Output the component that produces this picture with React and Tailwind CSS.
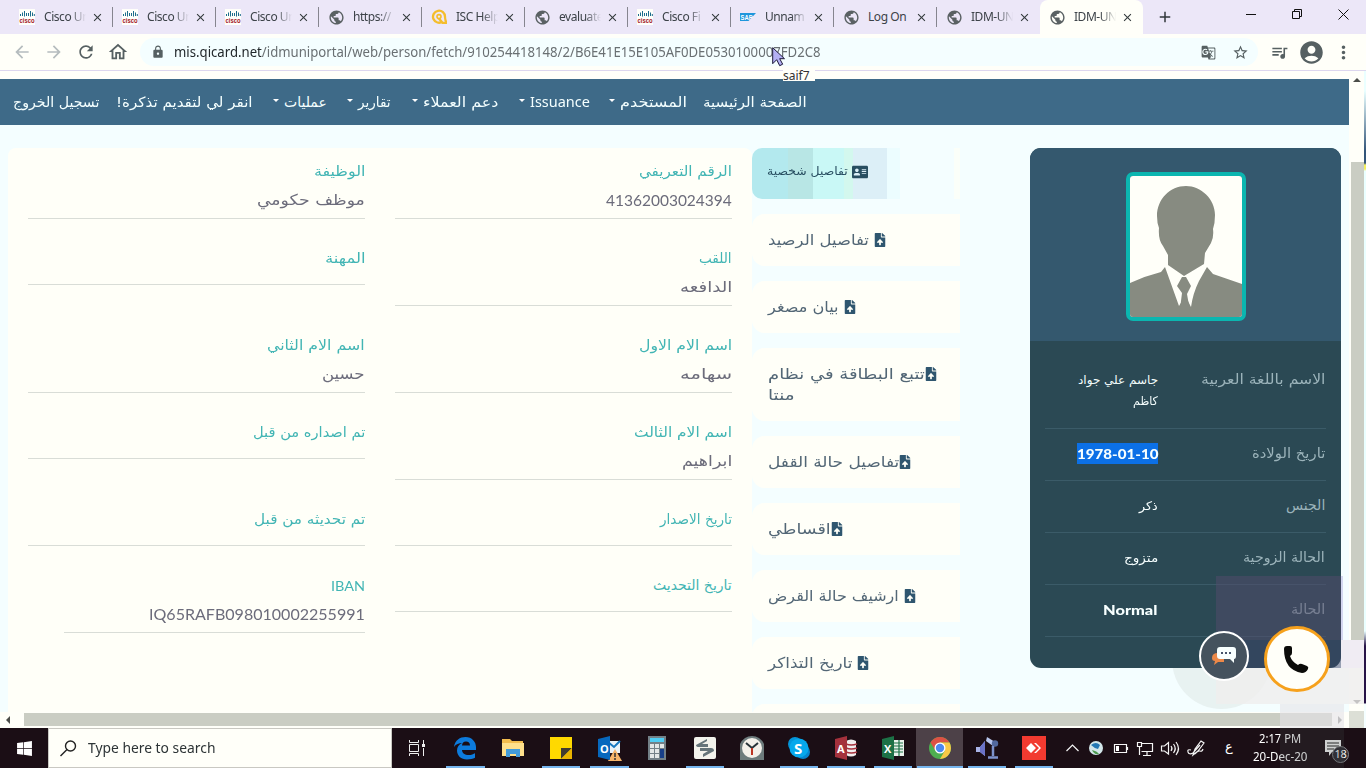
import React, { useLayoutEffect, useRef, useState } from "react";
import { FaFileUpload, FaAddressCard, FaWindows } from "react-icons/fa";
import {
  MdArrowBack, MdArrowForward, MdRefresh, MdLock, MdPublic, MdQueueMusic, MdAccountCircle,
  MdMoreVert, MdStarBorder, MdGTranslate, MdOutlineHome, MdClose, MdAdd, MdPhone,
} from "react-icons/md";

/* Single-line text condensed or widened to a given width. */
function Fit({ w, children, className = "", rtl = true }) {
  const ref = useRef(null);
  const [scale, setScale] = useState(1);
  useLayoutEffect(() => {
    const n = ref.current.offsetWidth;
    if (n) setScale(w / n);
  }, [w, children]);
  return (
    <span className={"flex shrink-0 justify-start " + className} dir="ltr" style={{ width: w }}>
      <span ref={ref} dir={rtl ? "rtl" : "ltr"} className="shrink-0 origin-left whitespace-nowrap" style={{ transform: `scaleX(${scale})` }}>
        {children}
      </span>
    </span>
  );
}

const AR = "font-['DejaVu_Sans',sans-serif]";

function CiscoIcon() {
  return (
    <svg width="16" height="16" viewBox="0 0 16 16" overflow="visible">
      <rect width="16" height="16" fill="#fffffa" />
      <path d="M1.500 5v2M3.500 3.500v3.500M5.500 2v5.500M7.500 4v3M9.500 4v3M11.500 2v5.500M13.500 3.500v3.500M15.300 5v2" stroke="#1c6c8c" strokeWidth="1" />
      <text x="0.5" y="14.300" fontSize="7.500" fontWeight="bold" fill="#a01424" textLength="15" lengthAdjust="spacingAndGlyphs" fontFamily="Liberation Sans">cisco</text>
    </svg>
  );
}
function QIcon() {
  return (
    <svg width="16" height="16" viewBox="0 0 16 16" fill="none" stroke="#f4bd2c" strokeWidth="2.3">
      <path d="M11.5 12.6A6 6 0 1 1 14 8q0 4 2 5.8h-4.5L8 9.5" />
      <circle cx="8" cy="7.6" r="2" strokeWidth="1.6" />
    </svg>
  );
}
function SapIcon() {
  return (
    <svg width="16" height="16" viewBox="0 0 16 16">
      <path d="M0 4h16L8.5 12H0z" fill="#1e96dc" />
      <text x="0.6" y="10.6" fontSize="7" fontWeight="bold" fill="#fff" textLength="12" lengthAdjust="spacingAndGlyphs" fontFamily="Liberation Sans">SAP</text>
    </svg>
  );
}
const globe = <MdPublic className="size-[17px] text-[#5a6163]" />;
const tabs = [
  { icon: <CiscoIcon />, t: "Cisco Un" },
  { icon: <CiscoIcon />, t: "Cisco Un" },
  { icon: <CiscoIcon />, t: "Cisco Un" },
  { icon: globe, t: "https://" },
  { icon: <QIcon />, t: "ISC Help" },
  { icon: globe, t: "evaluate" },
  { icon: <CiscoIcon />, t: "Cisco Fi" },
  { icon: <SapIcon />, t: "Unnam" },
  { icon: globe, t: "Log On", full: true },
  { icon: globe, t: "IDM-UN" },
  { icon: globe, t: "IDM-UN", active: true },
];

function TabStrip() {
  return (
    <div className="flex h-[34px] shrink-0 bg-[#ece7f8] pl-[10px] text-[#3c4248]">
      {tabs.map((tab, i) => (
        <div key={i} className={"relative flex h-[34px] w-[103px] shrink-0 items-center pl-[9px] " + (tab.active ? "rounded-t-lg bg-[#fffff9]" : "")}>
          <span className="flex w-[17px] shrink-0">{tab.icon}</span>
          <span className={"ml-[8px] w-[42px] shrink-0 overflow-hidden whitespace-nowrap font-['Noto_Sans',sans-serif] text-[12px] tracking-[-0.45px] " + (tab.full ? "" : "[mask-image:linear-gradient(to_right,black_62%,transparent)]")}>{tab.t}</span>
          <MdClose className="ml-[5px] size-[13px] shrink-0 stroke-current text-[#333a3c]" />
          {i < 9 && <span className="ml-auto h-[20px] w-px bg-[#86858f]" />}
        </div>
      ))}
      <div className="flex w-[43px] items-center justify-center"><MdAdd className="size-[18px] stroke-current text-[#30373a]" /></div>
      <svg className="ml-auto mr-[15px] mt-[6px]" width="108" height="18" fill="none" stroke="#111" strokeWidth="1">
        <path d="M3 8.500h10M51.500 5.500v-2h7v7h-2M49.500 5.500h7v7h-7zM95.500 3.500l10 10M105.500 3.500l-10 10" />
      </svg>
    </div>
  );
}

function AddressBar() {
  return (
    <div className="flex h-[37px] shrink-0 items-center border-b border-[#dcd6ee] bg-[#fffff9] text-[#566062]">
      <MdArrowBack className="ml-[12px] size-5 text-[#b5bcbe]" />
      <MdArrowForward className="ml-[12px] size-5 text-[#b5bcbe]" />
      <MdRefresh className="ml-[12px] size-5" />
      <MdOutlineHome className="ml-[11px] size-[22px]" />
      <div className="ml-[11px] flex h-[28px] w-[1118px] items-center rounded-full bg-[#f4feff]">
        <MdLock className="ml-[11px] size-[14px]" />
        <Fit w={647} rtl={false} className="ml-[9px] font-['Noto_Sans',sans-serif] text-[14px] leading-5 text-[#6a7073]">
          <span className="text-[#22282b]">mis.qicard.net</span>/idmuniportal/web/person/fetch/910254418148/2/B6E41E15E105AF0DE0530100007FD2C8
        </Fit>
        <MdGTranslate className="ml-auto size-[15px]" />
        <MdStarBorder className="ml-[16px] mr-[9px] size-[17px]" />
      </div>
      <MdQueueMusic className="ml-[12px] size-[19px]" />
      <MdAccountCircle className="ml-[9px] size-[27px]" />
      <MdMoreVert className="ml-[8px] size-[21px]" />
    </div>
  );
}

const nav = [
  { t: "تسجيل الخروج", w: 86, g: "ml-[13px]" },
  { t: "انقر لي لتقديم تذكرة!", w: 137, g: "ml-[17px]" },
  { t: "عمليات", w: 43, g: "ml-[20px]", c: true },
  { t: "تقارير", w: 33, g: "ml-[20px]", c: true },
  { t: "دعم العملاء", w: 75, g: "ml-[21px]", c: true },
  { t: "Issuance", w: 60, g: "ml-[21px]", c: true },
  { t: "المستخدم", w: 67, g: "ml-[19px]", c: true },
  { t: "الصفحة الرئيسية", w: 104, g: "ml-[16px]" },
];
function Navbar() {
  return (
    <nav className="flex h-[46px] shrink-0 items-center bg-[#3e6a88] text-[#f4ffff]">
      {nav.map((n) => (
        <div key={n.t} className={"flex items-center " + n.g}>
          {n.c && <span className="mr-[5px] -mt-1 border-x-[3px] border-t-[3px] border-x-transparent border-t-white" />}
          <Fit w={n.w} className={"-mt-px text-[14px] leading-5 " + (n.t === "Issuance" ? "font-['Noto_Sans',sans-serif]" : AR)} rtl={n.t !== "Issuance"}>{n.t}</Fit>
        </div>
      ))}
    </nav>
  );
}

/* label, label width, value, value width : right column then left column */
const fields = [
  ["الرقم التعريفي", 93, "41362003024394", 126], ["الوظيفة", 51, "موظف حكومي", 108],
  ["اللقب", 33, "الدافعه", 52], ["المهنة", 40],
  ["اسم الام الاول", 93, "سهامه", 52], ["اسم الام الثاني", 98, "حسين", 43],
  ["اسم الام الثالث", 98, "ابراهيم", 50], ["تم اصداره من قبل", 112],
  ["تاريخ الاصدار", 72], ["تم تحديثه من قبل", 111],
  ["تاريخ التحديث", 79], ["IBAN", 34, "IQ65RAFB098010002255991", 216],
];
function Details() {
  return (
    <section dir="rtl" className="ml-[8px] mt-[23px] grid h-[600px] w-[744px] shrink-0 grid-cols-[337px_337px] grid-rows-[87px_87px_87px_87px_66px_87px] content-start gap-x-[30px] rounded-t-lg bg-[#fffff8] pr-[20px] pt-[9px]">
      {fields.map(([l, lw, v, vw]) => {
        const latin = l === "IBAN";
        const latinValue = v && /\d/.test(v);
        return (
          <div key={l} className={"flex flex-col items-start border-b border-[#d9ddd7] " + (v ? "h-[62px]" : "h-[41px]") + (latin ? " w-[301px]" : "")}>
            <Fit w={lw} rtl={!latin} className={"h-[28px] items-center text-[14px] text-[#42b5b4] " + (latin ? "font-['Lato',sans-serif]" : AR)}>{l}</Fit>
            {v && <Fit w={vw} rtl={!latinValue} className={"h-[30px] items-center text-[15px] text-[#6c6c7b] " + (latinValue ? "font-['Lato',sans-serif]" : AR)}>{v}</Fit>}
          </div>
        );
      })}
    </section>
  );
}

const menu = [
  ["تفاصيل الرصيد", 101, true], ["بيان مصغر", 71, true], ["تتبع البطاقة في نظام", 157, false, "منتا"],
  ["تفاصيل حالة القفل", 131], ["اقساطي", 63], ["ارشيف حالة القرض", 131, true], ["تاريخ التذاكر", 84, true],
];
function SideMenu() {
  return (
    <aside className="mt-[23px] flex w-[208px] shrink-0 flex-col gap-[15px]">
      <div className="flex h-[51px] items-center rounded-l-[10px] border-r-[6px] border-[#fbfff9] bg-[linear-gradient(to_right,#b3e9ee_0_36px,#b8e6e5_36px_61px,#c9f8f6_61px_92px,#d3f8ee_92px_101px,#dceff7_101px_135px,#ecfdff_135px_148px,#f4feff_148px)] pl-[15px] text-[#284e61]">
        <Fit w={81} className={"-mt-1 text-[11.5px] " + AR}>تفاصيل شخصية</Fit>
        <FaAddressCard className="-mt-1 ml-[4px] size-[16px]" />
      </div>
      {menu.map(([t, w, space, second]) => (
        <div key={t} className={"flex shrink-0 flex-col justify-center rounded-l-[13px] bg-[#fffff8] pl-[16px] text-[#536776] " + (second ? "h-[73px]" : "h-[52px]")}>
          <div className="flex h-[21px] items-center">
            <Fit w={w} className={"text-[15px] " + AR}>{t}</Fit>
            <FaFileUpload className={"size-[14px] shrink-0 text-[#2f566f] " + (space ? "ml-[4px]" : "-ml-px")} />
          </div>
          {second && <Fit w={27} className={"h-[21px] items-center text-[15px] " + AR}>{second}</Fit>}
        </div>
      ))}
      <div className="h-[52px] shrink-0 rounded-tl-[13px] bg-[#fffff8]" />
    </aside>
  );
}

function Portrait() {
  return (
    <svg width="112" height="141" viewBox="0 0 112 141">
      <rect width="112" height="141" fill="#fffff9" />
      <g fill="#878b81">
        <path d="M56 10C40 10 27 23 27 40q0 7 2 12-1 12 4 18l5 9v10l16 11 20-12 1-11 6-10q3-6 2-14 2-6 2-14C85 23 71 10 56 10Z" />
        <path d="M0 107q15-7 31-11l4-5 14 39 3-5h6l3 6q2-14 8-26l8-14 6 7 29 10v34H0Z" />
        <path d="M52 101h4l5 9-4 8 4 23H49l3-24-5-7Z" />
      </g>
    </svg>
  );
}

const info = [
  ["تاريخ الولادة", 73, "1978-01-10", 81], ["الجنس", 39, "ذكر", 19],
  ["الحالة الزوجية", 82, "متزوج", 34], ["الحالة", 34, "Normal", 55],
];
function Profile() {
  return (
    <section className="ml-[70px] mt-[23px] flex h-[520px] w-[311px] shrink-0 flex-col overflow-hidden rounded-[11px] bg-[#2b4954]">
      <div className="flex h-[193px] shrink-0 justify-center bg-[#34586e] pt-[24px]">
        <div className="h-[149px] w-[120px] overflow-hidden rounded-[7px] border-4 border-[#0bb6b0]"><Portrait /></div>
      </div>
      <div className="mx-[15px] flex h-[88px] shrink-0 items-start justify-end border-b border-[#3b5b68] pr-px pt-[28px]">
        <div className={"mr-[43px] flex flex-col items-end text-[12px] text-[#f3fcfc] " + AR}>
          <Fit w={80} className="h-[21px] items-center">جاسم علي جواد</Fit>
          <Fit w={25} className="h-[21px] items-center">كاظم</Fit>
        </div>
        <Fit w={124} className={"h-[21px] items-center text-[14px] text-[#9bb3ba] " + AR}>الاسم باللغة العربية</Fit>
      </div>
      {info.map(([l, lw, v, vw], i) => {
        const latin = i === 0 || i === 3;
        return (
          <div key={l} className="mx-[15px] flex h-[52px] shrink-0 items-center border-b border-[#3b5b68] pb-[2px] pr-px">
            <div className="flex w-[113px] justify-end">
              <Fit w={vw} rtl={!latin} className={"h-[21px] items-center text-[#f7ffff] " + (latin ? "font-['Lato',sans-serif] text-[14px] font-black " : "text-[12px] " + AR) + (i === 0 ? " bg-[#0c70e6]" : "")}>{v}</Fit>
            </div>
            <Fit w={lw} className={"ml-auto h-[21px] items-center text-[14px] text-[#9bb3ba] " + AR}>{l}</Fit>
          </div>
        );
      })}
    </section>
  );
}

const Office = ({ fill, l, children }) => (
  <svg width="26" height="26" viewBox="0 0 26 26">
    {children}
    <path d="M2 4l12-3v24L2 22Z" fill={fill} />
    <text x="4" y="17.500" fontSize="11" fontWeight="bold" fill="#fff" fontFamily="Open Sans">{l}</text>
  </svg>
);
const apps = [
  [<svg width="24" height="24" viewBox="0 0 24 24"><path d="M1 11C2 4 7 1 12.500 1 19 1 23 6 23 11v3H9c0 3 3 5 6.500 5 3 0 5-1 6.500-1.800v4.600C20 23 17 23.500 14 23.500 8 23.500 4 19.500 4 14.500 4 11 6 8.500 9 7 6 7 3 8 1 11Zm8-1.500h8C17 7 15.500 5.500 13 5.500S9.300 7 9 9.500Z" fill="#0d7bdc" /></svg>, "w-[39px]"],
  [<svg width="24" height="24" viewBox="0 0 24 24"><path d="M1 3h8l2 2h11v15H1Z" fill="#f3bd4e" /><path d="M1 7h22v13H1Z" fill="#ffe08c" /><path d="M5 13h14v8h-4v-3H9v3H5Z" fill="#439bd9" /></svg>, ""],
  [<svg width="24" height="24" viewBox="0 0 24 24"><path d="M1 1h22v22H1Z" fill="#ffd900" /><path d="M12 23V12h11Z" fill="#413c30" /><path d="M12 23l11-11v11Z" fill="#eab500" /></svg>, "w-[38px]"],
  [<Office fill="#0768bd" l="O"><path d="M12 6h12v12H12Z" fill="#e9f3fa" /><path d="M12 7l6 5 6-6" stroke="#1677c0" strokeWidth="2" fill="none" /><path d="M19 14l7 12H12Z" fill="#f6b56b" /><path d="M19 18v4m0 1v2" stroke="#333" strokeWidth="1.500" /></Office>, "w-[39px]"],
  [<svg width="20" height="24" viewBox="0 0 20 24"><path d="M1 0h18v24H1Z" fill="#738087" /><path d="M3 2h14v4H3Z" fill="#4fcdf4" /><path d="M3 8h4v4H3Zm5 0h4v4H8Zm5 0h4v4h-4ZM3 13h4v4H3Zm5 0h4v4H8ZM3 18h4v4H3Zm5 0h4v4H8Z" fill="#e3e7e7" /><path d="M13 13h4v9h-4Z" fill="#183f88" /></svg>, ""],
  [<svg width="22" height="22" viewBox="0 0 22 22"><rect width="22" height="22" rx="2" fill="#f3f3ec" /><path d="M13 2L2 8q0 2 3 2h9V7L8 7l5-3ZM9 20l11-6q0-3-3-3H6v3h8l-5 3Z" fill="#66757a" /></svg>, "w-[38px]"],
  [<svg width="24" height="24" viewBox="0 0 24 24"><path d="M0 24V8Q4 0 12 0t12 8v16Z" fill="#6d7b7c" /><circle cx="12" cy="12" r="10" fill="#f3f0ea" /><path d="M6 7l6 5 6-5" stroke="#273238" strokeWidth="2" fill="none" /><path d="M12 12v7" stroke="#bd3423" strokeWidth="2" /></svg>, ""],
  [<svg width="24" height="24" viewBox="0 0 24 24"><circle cx="8" cy="8" r="7" fill="#0495d9" /><circle cx="16" cy="16" r="7" fill="#0785ce" /><circle cx="12" cy="12" r="9.500" fill="#06a8ec" /><text x="7" y="17.500" fontSize="15" fontWeight="bold" fill="#fff" fontFamily="Open Sans">S</text></svg>, "w-[38px]"],
  [<Office fill="#a4313c" l="A"><path d="M13 6q5-3 10 0v14q-5 3-10 0Z" fill="#f1eeee" /><path d="M13 9q5 2 11 0M13 13q5 2 11 0M13 17q5 2 11 0" stroke="#a4313c" strokeWidth="1.500" fill="none" /></Office>, "w-[38px]"],
  [<Office fill="#1c7146" l="X"><path d="M13 5h11v16H13Z" fill="#e9f2eb" /><path d="M14 8h9M14 11h9M14 14h9M14 17h9M19 5v16" stroke="#1c7146" strokeWidth="1.200" /></Office>, "w-[38px]"],
  [<svg width="24" height="24" viewBox="0 0 24 24"><circle cx="12" cy="12" r="11" fill="#4eae50" /><path d="M2.500 6.500A11 11 0 0 1 21.500 6.500H12L7 14Z" fill="#dd5144" /><path d="M12 6.500h9.500A11 11 0 0 1 12 23l4.800-8.200Z" fill="#f9c846" /><circle cx="12" cy="12" r="5.500" fill="#fff" /><circle cx="12" cy="12" r="4.200" fill="#4d88f0" /></svg>, "w-[46px]", "bg-[#4d4148]"],
  [<svg width="24" height="24" viewBox="0 0 24 24"><path d="M1 11h4l5-6v15l-5-4H1Z" fill="#aab4e8" /><path d="M5 11l5-6v15l-5-4Z" fill="#6b73c8" /><path d="M12 1l8 5-2 4-7-5Z" fill="#b8c7ee" /><circle cx="20" cy="7.500" r="3.200" fill="#52699e" /><path d="M18 10v10M13 21.500h10" stroke="#7d92cc" strokeWidth="2.500" /></svg>, "w-[38px]"],
  [<svg width="24" height="24" viewBox="0 0 24 24"><path d="M0 0h24v24H0Z" fill="#f23a30" /><path d="M9 7l5 5-5 5-5-5ZM12 7h2l5 5-5 5h-2l5-5Z" fill="#fff" /></svg>, "w-[38px]"],
];

function Taskbar() {
  return (
    <div className="flex h-[40px] shrink-0 bg-[#1b0e15] text-white">
      <div className="flex w-[48px] items-center justify-center"><FaWindows className="size-[17px]" /></div>
      <div className="flex w-[344px] items-center border border-[#c9c8c2] bg-[#fffff9] text-[#2d3436]">
        <svg className="ml-[11px]" width="17" height="17" fill="none" stroke="#222" strokeWidth="1.400"><circle cx="10.500" cy="6" r="5" /><path d="M7 9.500L.5 16" /></svg>
        <Fit w={127} rtl={false} className="ml-[11px] font-['Noto_Sans',sans-serif] text-[14.5px]">Type here to search</Fit>
      </div>
      <div className="flex w-[49px] items-center justify-center">
        <svg width="18" height="16" fill="none" stroke="#eee"><path d="M1.500 0v2.500h9V0M1.500 4.500h9v7h-9zM1.500 16v-2.500h9V16M15.500 0v4M15.500 8v8" /><path d="M14 4h3v3h-3z" fill="#eee" stroke="none" /></svg>
      </div>
      {apps.map(([icon, bar, bg], i) => (
        <div key={i} className={"relative flex shrink-0 items-center justify-center " + (i < 5 ? "w-[48px] " : "w-[47px] ") + (bg || "")}>
          {icon}
          <span className={"absolute bottom-0 h-[2px] bg-[#76b5ee] " + bar} />
        </div>
      ))}
      <svg className="ml-[8px] mt-[8px]" width="140" height="24" fill="none" stroke="#f5f5f5" strokeWidth="1.200">
        <path d="M1.500 15l6-6 6 6" />
        <circle cx="31" cy="12" r="7" fill="#d3e7ea" stroke="none" /><path d="M26 9q5-4 9 0l-2 4q-4-1-7-4Z" fill="#2478b4" stroke="none" /><path d="M27 14q5 1 7 4-5 1-7-4Z" fill="#4c9a4f" stroke="none" />
        <path d="M49.500 8.500h12v8h-12zM62.500 11v3" /><path d="M51 10h3v5h-3z" fill="#fff" stroke="none" />
        <path d="M76.500 7.500h11v8h-11M82 16v3M78 19.500h8M72.500 6.500h4v4h-4zM74.500 11v8" />
        <path d="M96.500 10v5h3l4 3V6.500l-4 3.500zM106 10q2 2.500 0 5M108.500 8q3.500 4.500 0 9M111 6q5 6.500 0 13" />
        <path d="M126 14q-4-1-3 2 1 3 5 1l7-8M128 19l2-6 6-8 3 2-6 8zM130 18q3-4 5-3t3-2" />
      </svg>
      <span className="ml-[20px] mt-[9px] w-[8px] font-['DejaVu_Sans',sans-serif] text-[13px]">ع</span>
      <div className="ml-[18px] flex w-[58px] flex-col items-center justify-center font-['Noto_Sans',sans-serif] text-[12px] leading-[18px]">
        <Fit w={42} rtl={false}>2:17 PM</Fit>
        <Fit w={54} rtl={false}>20-Dec-20</Fit>
      </div>
      <div className="relative ml-[15px] mt-[11px] h-[24px] w-[26px]">
        <svg width="18" height="18"><path d="M1 1h16v12H8l-3 4v-4H1Z" fill="#fff" /><path d="M3 4h12M3 7h12M3 10h7" stroke="#222" /></svg>
        <span className="absolute left-[8px] top-[7px] flex size-[17px] items-center justify-center rounded-full border border-[#85858a] bg-[#2c2930] font-['Noto_Sans',sans-serif] text-[11px] tracking-tight">18</span>
      </div>
    </div>
  );
}

export default function App() {
  return (
    <div className="relative flex h-[768px] w-[1366px] flex-col overflow-hidden bg-[#fffff9]">
      <TabStrip />
      <AddressBar />
      <div className="flex h-[657px] shrink-0">
        <div className="mt-[8px] flex w-[1349px] shrink-0 flex-col">
          <Navbar />
          <div className="flex h-[587px] shrink-0 items-start overflow-hidden bg-[#f4feff]">
            <Details />
            <SideMenu />
            <Profile />
          </div>
          <div className="flex h-[15px] shrink-0 items-center">
            <span className="ml-[6px] border-y-[4px] border-r-[4px] border-y-transparent border-r-[#4b4d49]" />
            <span className="ml-[14px] h-[13px] w-[1308px] bg-[#cacdc3]" />
            <span className="ml-[6px] border-y-[4px] border-l-[4px] border-y-transparent border-l-[#898b87]" />
          </div>
        </div>
        <div className="flex w-[15px] flex-col items-center">
          <span className="mt-[7px] border-x-[4px] border-b-[4px] border-x-transparent border-b-[#4b4d49]" />
          <span className="ml-[2px] mt-[80px] h-[478px] w-[13px] bg-[#cacdc3]" />
          <span className="mt-[60px] border-x-[4px] border-t-[4px] border-x-transparent border-t-[#222]" />
          <span className="mt-[7px] h-[17px] w-full bg-[#dcdfd6]" />
        </div>
        <div className="w-[2px] bg-[linear-gradient(to_bottom,#eaffff_0_20px,#33557a_80px_92px,#f4f060_94px_98px,#eaffff_100px_560px,#281448_575px_632px,#f4feff_633px)]" />
      </div>
      <Taskbar />

      {/* floating contact controls with their translucent backdrop */}
      <div className="absolute left-[1172px] top-[610px] h-[99px] w-[108px] overflow-hidden [clip-path:inset(58px_0_0_0)]"><div className="size-[99px] rounded-full bg-[#dfe9e8]/60" /></div>
      <div className="absolute left-[1216px] top-[576px] h-[64px] w-[125px] bg-[#544b6c]/50" />
      <div className="absolute left-[1341px] top-[576px] h-[64px] w-[2px] bg-[#d3d8f0]" />
      <div className="absolute left-[1216px] top-[640px] h-[28px] w-[125px] bg-[#3c4468]/50" />
      <div className="absolute left-[1216px] top-[668px] h-[36px] w-[148px] bg-[#efeeee]/80" />
      <div className="absolute left-[1341px] top-[640px] h-[28px] w-[23px] bg-[#eeeaf2]/90" />
      <div className="absolute left-[1280px] top-[704px] h-[24px] w-[64px] bg-[#e5e3e8]/60" />
      <div className="absolute left-[1280px] top-[728px] h-[40px] w-[64px] bg-[#3a4444]/25" />
      <div className="absolute left-[1199px] top-[631px] flex size-[50px] items-center justify-center rounded-full border-2 border-white bg-[#45525e]">
        <svg width="26" height="22" viewBox="0 0 26 22">
          <path d="M1 13q0-5 6-5h6v9H7l-4 3 1-4q-3 0-3-3Z" fill="#ed8848" />
          <path d="M9 2h13q3 0 3 3v6q0 3-2 3v4l-4-4H9q-3 0-3-3V5q0-3 3-3Z" fill="#f8ffff" />
          <path d="M10 8h2m2 0h2m2 0h2" stroke="#46536b" strokeWidth="2" />
        </svg>
      </div>
      <div className="absolute left-[1264px] top-[626px] flex size-[66px] items-center justify-center rounded-full border-[3px] border-[#f6a11c] bg-[#fffff9] pr-[3px] text-black">
        <svg width="26" height="28" viewBox="0 0 26 28"><path d="M1 4Q1 1 4 1h3q2 0 2 2v5q0 2-2 3 2 6 8 9 2-2 4-1l5 2q2 1 1 3-2 4-6 4Q1 25 1 4Z" fill="#0c0c0a" /></svg>
      </div>

      {/* pointer and its name tag */}
      <div className="absolute left-[783px] top-[70px] flex h-[11px] w-[32px] items-center bg-[#fffff9]">
        <Fit w={27} rtl={false} className="font-['Noto_Sans',sans-serif] text-[12px] leading-[14px] text-[#333]">saif7</Fit>
      </div>
      <svg className="absolute left-[772px] top-[47px]" width="13" height="20"><path d="M.7.7v16l4-4 3 6 3-1.500-3-5.500h4.800Z" fill="#b4b0f4" stroke="#1d1838" /></svg>
    </div>
  );
}
